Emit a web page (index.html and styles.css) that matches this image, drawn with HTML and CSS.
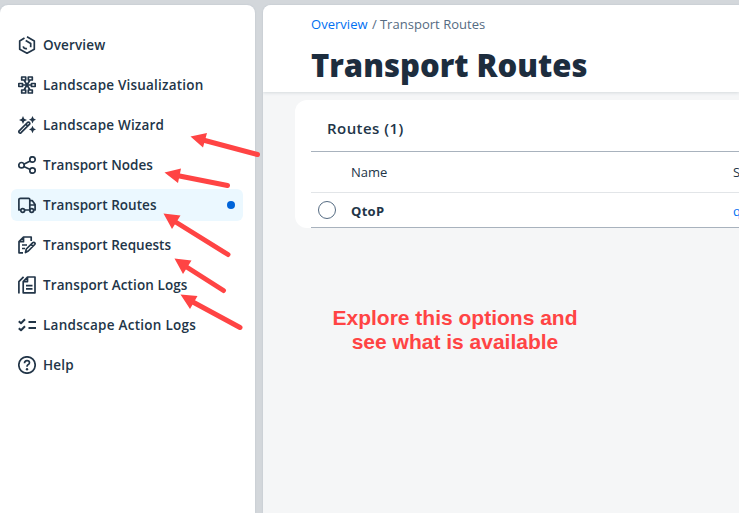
FILE: index.html
```
<!DOCTYPE html>
<html lang="en">
<head>
<meta charset="utf-8">
<title>Transport Routes</title>
<link rel="stylesheet" href="styles.css">
</head>
<body>
<div class="app">
  <nav class="sidebar">
    <a class="item overview"><svg class="icon" viewBox="0 0 18 18"><path d="M6.500 2 1.700 4.900v8.400L9 17.200l7.300-3.900V5L9 .8M7.700 4.400l5 3v3.800M5.200 10.400c.5 2 2 2.600 3.800 2.200"/></svg><span>Overview</span></a>
    <a class="item visual"><svg class="icon" viewBox="0 0 18 18"><path d="M3.700 1h4v3h-4zM10.300 1h4v3h-4zM.8 7.500h3.700v3H.8zM13.500 7.500h3.700v3h-3.700zM3.700 14h4v3h-4zM10.300 14h4v3h-4zM4.500 9h9M6 4l6 10M12 4 6 14"/></svg><span>Landscape Visualization</span></a>
    <a class="item wizard"><svg class="icon" viewBox="0 0 18 18"><path d="m1.200 14.800 8.300-8.300q1-.8 1.900 0 .8.900 0 1.900l-8.300 8.300q-1 .7-1.900 0-.7-.900 0-1.900ZM7.800 8.200l2 2"/><path class="solid" d="m5 0 1.200 2.800L9 4 6.200 5.200 5 8 3.800 5.200 1 4l2.800-1.200ZM14.500 0l1.200 2.600L18 3.700l-2.300 1.100-1.200 2.700-1.200-2.700L11 3.700l2.300-1.100ZM14.500 9.700l1.200 2.600 2.300 1.100-2.300 1.100-1.200 2.700-1.200-2.700-2.300-1.100 2.300-1.100Z"/></svg><span>Landscape Wizard</span></a>
    <a class="item nodes"><svg class="icon" viewBox="0 0 18 18"><circle cx="3.500" cy="9.200" r="2.700"/><circle cx="14.500" cy="3.500" r="2.700"/><circle cx="14.500" cy="14.500" r="2.700"/><path d="m5.800 8.200 6.400-3.300M5.800 10.400l6.400 3"/></svg><span>Transport Nodes</span></a>
    <a class="item routes selected"><svg class="icon" viewBox="0 0 18 18"><path d="M2.500 14H.9V3.500Q.9 2.300 2.500 2.300h8q1.300 0 1.300 1.200V14H7M11.800 4.700h2.600l2.700 3.800V14H16M12 9h5"/><circle cx="4.700" cy="14.500" r="1.900"/><circle cx="13.700" cy="14.500" r="1.900"/></svg><span>Transport Routes</span><i class="dot"></i></a>
    <a class="item requests"><svg class="icon" viewBox="0 0 18 18"><path d="M5 16.800H1V5.700L5.500 1h7.700v4M5.500 1.200v4.500H1.200M4 9h5M4 12.500h3M7.500 16.500l.8-3.500 6.500-6.300q1-.8 1.900 0 .8.900 0 1.800L10.300 15ZM13 8.300l2 2"/></svg><span>Transport Requests</span></a>
    <a class="item logs"><svg class="icon" viewBox="0 0 18 18"><path d="M5.200 5.600 9.500 1H17v15.800H5.200ZM9.500 1.300v4.300H5.400M8 9.700h6.500M8 12.900h6.500M.9 17.500V5.700L5.600.8"/></svg><span>Transport Action Logs</span></a>
    <a class="item landlogs"><svg class="icon bold" viewBox="0 0 18 18"><path d="m.8 5.200 2.200 2 4-4M.8 12.200l2.200 2 4-4M10.500 5.900H18M10.500 12H18"/></svg><span>Landscape Action Logs</span></a>
    <a class="item help"><svg class="icon" viewBox="0 0 18 18"><circle cx="9" cy="9" r="8.200"/><path d="M6.500 7.200q0-2.500 2.500-2.500 2.500 0 2.500 2.100 0 1.300-1.500 2Q9 9.300 9 10.800"/><circle class="solid" cx="9" cy="13.300" r="1.200"/></svg><span>Help</span></a>
  </nav>
  <main class="page">
    <header class="header">
      <div class="crumbs"><a>Overview</a><span class="slash">/</span><span>Transport Routes</span></div>
      <h1><span>Transport Routes</span></h1>
    </header>
    <section class="card">
      <h2><span>Routes (1)</span></h2>
      <div class="table">
        <div class="row head"><span class="name">Name</span><span class="source">S</span></div>
        <div class="row"><i class="radio"></i><b class="name">QtoP</b><a class="source">q</a></div>
      </div>
    </section>
    <p class="note"><span>Explore this options and</span><br><span>see what is available</span></p>
  </main>
</div>
<svg class="arrows" viewBox="0 0 739 513">
  <path class="shaft" d="M203 140 257.500 154.500M177 175.500 227.500 185.500M174 221 228 254.500M185 266 223.500 290.500M191 301 240 327.500"/>
  <path class="tip" d="M190.500 136.500 207 133 203 147.500ZM164.500 172.500 181 168.500 178 183ZM163.500 213.500 180.500 215.500 172 229ZM174.500 258.500 191.500 260.500 183 274ZM180.500 294.500 197.500 296 190 309Z"/>
</svg>
</body>
</html>
```
FILE: styles.css
```
* { box-sizing: border-box; }
body {
  margin: 0;
  height: 513px;
  overflow: hidden;
  background: #d3d7db;
  color: #223548;
  font: 13px/20px "Open Sans", "Noto Sans", sans-serif;
}
.app {
  display: flex;
  gap: 8px;
  height: 513px;
  padding-top: 5px;
}
.sidebar {
  width: 255px;
  flex: none;
  display: flex;
  flex-direction: column;
  gap: 8px;
  padding: 24px 12px 0 11px;
  background: #fff;
  border-radius: 8px 8px 0 0;
  box-shadow: 0 0 2px #b9c2cb;
}
.item {
  display: flex;
  align-items: center;
  gap: 7px;
  height: 32px;
  padding: 0 8px 0 7px;
  border-radius: 6px;
  font-size: 13.5px;
  font-weight: 650;
  letter-spacing: .04px;
  white-space: nowrap;
}
.overview { letter-spacing: .14px; }
.logs { letter-spacing: .1px; }
.visual, .wizard, .help { letter-spacing: .2px; }
.landlogs { letter-spacing: .26px; }
.selected { background: #ebf8ff; }
.dot {
  width: 8px;
  height: 8px;
  margin-left: auto;
  border-radius: 50%;
  background: #0064d9;
}
.icon {
  width: 18px;
  height: 18px;
  flex: none;
  fill: none;
  stroke: #223548;
  stroke-width: 1.7;
  stroke-linejoin: round;
}
.icon.bold { stroke-width: 2; }
.icon .solid { fill: #223548; stroke: none; }
.page {
  flex: 1;
  min-width: 0;
  background: #f5f6f7;
  border-radius: 8px 0 0 0;
  box-shadow: 0 0 2px #b9c2cb;
  overflow: hidden;
}
.header {
  height: 87px;
  padding: 9px 48px 0;
  background: #fff;
  box-shadow: 0 1px 3px #d5dade;
}
.crumbs { color: #556b82; letter-spacing: .03px; }
.crumbs a, a.source { color: #0070f2; }
.slash { margin: 0 3px 0 4.500px; }
h1 {
  margin: 10px 0 0;
  color: #1d2d3e;
  font-size: 31px;
  line-height: 42px;
  font-weight: 800;
  white-space: nowrap;
}
.card {
  height: 128px;
  margin: 8px 0 0 32px;
  padding-left: 16px;
  background: #fff;
  border-radius: 12px 0 0 12px;
}
h2 {
  height: 51px;
  margin: 0;
  padding: 18px 16px 0;
  font-size: 15px;
  line-height: 20px;
  font-weight: 650;
  letter-spacing: .45px;
}
.table { border-top: 1px solid #a8b2bd; border-bottom: 1px solid #a8b2bd; }
.row {
  display: grid;
  grid-template-columns: 40px 382px 1fr;
  align-items: center;
  height: 34px;
}
.row.head { height: 41px; border-bottom: 1px solid #e2e5e8; }
.name { grid-column: 2; justify-self: start; }
b.name { font-weight: 700; letter-spacing: .3px; }
b.name, a.source { padding-top: 2px; }
.radio {
  width: 18px;
  height: 18px;
  margin-left: 7px;
  border: 1px solid #556b82;
  border-radius: 50%;
}
.note {
  width: 248px;
  margin: 78px 0 0 68px;
  color: #ff4444;
  font: bold 21px/24px "Liberation Sans", Arial, sans-serif;
  text-align: center;
  white-space: nowrap;
}
.arrows {
  position: absolute;
  inset: 0;
  width: 739px;
  height: 513px;
  pointer-events: none;
}
.shaft { fill: none; stroke: #ff4444; stroke-width: 5; stroke-linecap: round; }
.tip { fill: #ff4444; }
```
